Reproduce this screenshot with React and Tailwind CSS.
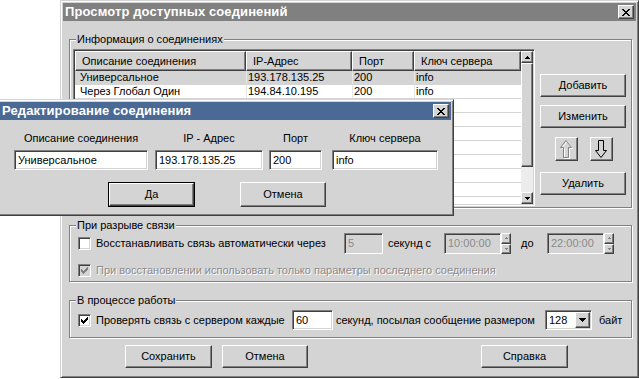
import React from 'react';

// classic 3D edges
const raised =
  'border border-t-white border-l-white border-r-[#404040] border-b-[#404040] shadow-[inset_-1px_-1px_0_#808080] bg-[#d4d4d4]';
const sunken =
  'border border-t-[#808080] border-l-[#808080] border-r-white border-b-white shadow-[inset_1px_1px_0_#404040,inset_-1px_-1px_0_#d4d4d4]';
const frame =
  'border border-t-[#d4d4d4] border-l-[#d4d4d4] border-r-[#404040] border-b-[#404040] shadow-[inset_1px_1px_0_#fff,inset_-1px_-1px_0_#808080] bg-[#d4d4d4] p-[2px]';
const disabledText = 'text-[#8a8a8a] [text-shadow:1px_1px_0_#fff]';

function CloseX() {
  return (
    <svg width="8" height="7" viewBox="0 0 8 7" shapeRendering="crispEdges">
      <path
        d="M0 0h2v1h-2z M6 0h2v1h-2z M1 1h2v1h-2z M5 1h2v1h-2z M2 2h4v1h-4z M3 3h2v1h-2z M2 4h4v1h-4z M1 5h2v1h-2z M5 5h2v1h-2z M0 6h2v1h-2z M6 6h2v1h-2z"
        fill="#000"
      />
    </svg>
  );
}

function TitleBar({ title, active }) {
  return (
    <div
      className={`h-[18px] flex items-center justify-between pl-[2px] pr-[2px] ${
        active ? 'bg-[#4a6995]' : 'bg-[#808080]'
      }`}
    >
      <span className="text-white font-bold text-[13px] leading-[16px] tracking-[0.1px]">{title}</span>
      <div className={`${raised} w-[16px] h-[14px] flex items-center justify-center`}>
        <CloseX />
      </div>
    </div>
  );
}

function Button({ className = '', children, isDefault }) {
  if (isDefault) {
    return (
      <div className={`border border-black ${className} flex`}>
        <div className={`${raised} flex-1 flex items-center justify-center`}>{children}</div>
      </div>
    );
  }
  return <div className={`${raised} ${className} flex items-center justify-center`}>{children}</div>;
}

function Check({ checked, disabled }) {
  return (
    <div
      className={`${sunken} w-[13px] h-[13px] shrink-0 flex items-center justify-center ${
        disabled ? 'bg-[#d4d4d4]' : 'bg-white'
      }`}
    >
      {checked && (
        <svg width="7" height="7" viewBox="0 0 7 7" shapeRendering="crispEdges">
          <path
            d="M6 0h1v1h-1z M5 1h2v1h-2z M0 2h1v1h-1z M4 2h3v1h-3z M0 3h2v1h-2z M3 3h3v1h-3z M0 4h5v1h-5z M1 5h3v1h-3z M2 6h1v1h-1z"
            fill={disabled ? '#808080' : '#000'}
          />
        </svg>
      )}
    </div>
  );
}

function Group({ label, className = '', children }) {
  return (
    <div className={`relative border border-[#808080] shadow-[inset_1px_1px_0_#fff,1px_1px_0_#fff] ${className}`}>
      <span className="absolute -top-[7px] left-[6px] bg-[#d4d4d4] px-[1px] leading-[13px]">{label}</span>
      {children}
    </div>
  );
}

function Tri({ dir = 'up', color = '#000' }) {
  const d =
    dir === 'up'
      ? 'M3 0h1v1h-1z M2 1h3v1h-3z M1 2h5v1h-5z M0 3h7v1h-7z'
      : 'M0 0h7v1h-7z M1 1h5v1h-5z M2 2h3v1h-3z M3 3h1v1h-1z';
  return (
    <svg width="7" height="4" viewBox="0 0 7 4" shapeRendering="crispEdges">
      <path d={d} fill={color} />
    </svg>
  );
}

function SmallTri({ dir = 'up' }) {
  const d = dir === 'up' ? 'M1 0h1v1h-1z M0 1h3v1h-3z' : 'M0 0h3v1h-3z M1 1h1v1h-1z';
  return (
    <svg width="3" height="2" viewBox="0 0 3 2" shapeRendering="crispEdges">
      <path d={d} fill="#808080" />
    </svg>
  );
}

function Arrow({ dir, disabled }) {
  const up = 'M6 0.5 L11.5 7.5 H8.5 V17.5 H3.5 V7.5 H0.5 Z';
  const down = 'M6 17.5 L11.5 10.5 H8.5 V0.5 H3.5 V10.5 H0.5 Z';
  const d = dir === 'up' ? up : down;
  return (
    <svg width="13" height="19" viewBox="0 0 13 19">
      {disabled && <path d={d} transform="translate(1 1)" fill="none" stroke="#fff" strokeWidth="1" />}
      <path d={d} fill="none" stroke={disabled ? '#808080' : '#000'} strokeWidth="1" />
    </svg>
  );
}

function TimeEdit({ value }) {
  return (
    <div className="flex items-center">
      <div className={`${sunken} w-[57px] h-[21px] bg-[#d4d4d4] flex items-center pl-[3px] text-[#8a8a8a]`}>
        {value}
      </div>
      <div className="w-[10px] h-[21px] flex flex-col">
        <div className={`${raised} flex-1 flex items-center justify-center`}>
          <SmallTri dir="up" />
        </div>
        <div className={`${raised} flex-1 flex items-center justify-center`}>
          <SmallTri dir="down" />
        </div>
      </div>
    </div>
  );
}

const rows = [
  ['Универсальное', '193.178.135.25', '200', 'info'],
  ['Через Глобал Один', '194.84.10.195', '200', 'info'],
];

function ListView() {
  const cols = ['w-[171px]', 'w-[106px]', 'w-[62px]', 'w-[107px]'];
  const heads = ['Описание соединения', 'IP-Адрес', 'Порт', 'Ключ сервера'];
  const empty = Array.from({ length: 8 });
  return (
    <div className={`${sunken} w-[462px] h-[157px] bg-white flex p-[1px] overflow-hidden`}>
      <div className="w-[446px] flex flex-col overflow-hidden">
        <div className="flex h-[20px] shrink-0">
          {heads.map((h, i) => (
            <div key={h} className={`${raised} ${cols[i]} flex items-center pl-[6px]`}>
              {h}
            </div>
          ))}
        </div>
        {rows.map((r, ri) => (
          <div
            key={ri}
            className={`flex h-[14px] shrink-0 border-b border-[#d4d4d4] ${ri === 0 ? 'bg-[#d4d4d4]' : 'bg-white'}`}
          >
            {r.map((c, i) => (
              <div
                key={i}
                className={`${cols[i]} ${i === 0 ? 'pl-[5px]' : 'pl-[1px] border-l border-[#e6e6e6]'} leading-[13px]`}
              >
                {c}
              </div>
            ))}
          </div>
        ))}
        {empty.map((_, i) => (
          <div key={i} className="h-[14px] shrink-0 border-b border-[#d4d4d4]" />
        ))}
      </div>
      <div className="w-[12px] flex flex-col">
        <div className={`${raised} h-[12px] flex items-center justify-center`}>
          <svg width="5" height="3" viewBox="0 0 5 3" shapeRendering="crispEdges">
            <path d="M2 0h1v1h-1z M1 1h3v1h-3z M0 2h5v1h-5z" fill="#000" />
          </svg>
        </div>
        <div className={`${raised} h-[104px]`} />
        <div className="h-[25px] bg-[#ececec]" />
        <div className={`${raised} h-[12px] flex items-center justify-center`}>
          <svg width="5" height="3" viewBox="0 0 5 3" shapeRendering="crispEdges">
            <path d="M0 0h5v1h-5z M1 1h3v1h-3z M2 2h1v1h-1z" fill="#000" />
          </svg>
        </div>
      </div>
    </div>
  );
}

function EditDialog() {
  const fields = [
    { label: 'Описание соединения', value: 'Универсальное', w: 'w-[134px]' },
    { label: 'IP - Адрес', value: '193.178.135.25', w: 'w-[108px]' },
    { label: 'Порт', value: '200', w: 'w-[53px]' },
    { label: 'Ключ сервера', value: 'info', w: 'w-[106px]' },
  ];
  return (
    <div className={`${frame} absolute left-[-3px] top-[99px] w-[457px] h-[117px] flex flex-col`}>
      <TitleBar title="Редактирование соединения" active />
      <div className="flex pl-[14px] mt-[12px]">
        {fields.map((f, i) => (
          <div
            key={f.label}
            className={`${f.w} flex flex-col items-center ${
              i === 1 ? 'ml-[7px]' : i === 2 ? 'ml-[6px]' : i === 3 ? 'ml-[10px]' : ''
            }`}
          >
            <span className="h-[13px] leading-[13px] whitespace-nowrap">{f.label}</span>
            <div className={`${sunken} bg-white w-full h-[20px] mt-[5px] flex items-center pl-[3px]`}>
              {f.value}
            </div>
          </div>
        ))}
      </div>
      <div className="flex pl-[108px] mt-[12px]">
        <Button isDefault className="w-[87px] h-[25px]">
          Да
        </Button>
        <Button className="w-[86px] h-[25px] ml-[45px]">Отмена</Button>
      </div>
    </div>
  );
}

export default function App() {
  return (
    <div className="relative w-[639px] h-[379px] bg-white overflow-hidden font-['Liberation_Sans',Arial,sans-serif] text-[11px] leading-[13px] text-black">
      {/* main window */}
      <div className={`${frame} absolute left-[60px] top-0 w-[579px] h-[378px] flex flex-col`}>
        <TitleBar title="Просмотр доступных соединений" />
        <div className="pl-[6px] flex flex-col">
          <Group label="Информация о соединениях" className="w-[563px] h-[169px] mt-[18px]">
            <div className="flex pl-[3px] pt-[9px]">
              <ListView />
              <div className="ml-[5px] w-[86px] pt-[25px] flex flex-col">
                <Button className="h-[23px]">Добавить</Button>
                <Button className="h-[23px] mt-[8px]">Изменить</Button>
                <div className="flex mt-[9px] pl-[15px] gap-[12px]">
                  <Button className="w-[23px] h-[24px]">
                    <Arrow dir="up" disabled />
                  </Button>
                  <Button className="w-[23px] h-[24px]">
                    <Arrow dir="down" />
                  </Button>
                </div>
                <Button className="h-[23px] mt-[11px]">Удалить</Button>
              </div>
            </div>
          </Group>

          <Group label="При разрыве связи" className="w-[563px] h-[57px] mt-[17px]">
            <div className="pl-[8px] pt-[7px] flex flex-col">
              <div className="flex items-center h-[21px]">
                <Check />
                <span className="ml-[5px] w-[248px] whitespace-nowrap">Восстанавливать связь автоматически через</span>
                <div className={`${sunken} w-[39px] h-[21px] bg-[#d4d4d4] flex items-center pl-[3px] text-[#8a8a8a]`}>
                  5
                </div>
                <span className="ml-[5px] w-[56px]">секунд с</span>
                <TimeEdit value="10:00:00" />
                <span className="ml-[10px] w-[26px]">до</span>
                <TimeEdit value="22:00:00" />
              </div>
              <div className="flex items-center h-[13px] mt-[10px]">
                <Check checked disabled />
                <span className={`ml-[5px] whitespace-nowrap ${disabledText}`}>
                  При восстановлении использовать только параметры последнего соединения
                </span>
              </div>
            </div>
          </Group>

          <Group label="В процессе работы" className="w-[563px] h-[38px] mt-[18px]">
            <div className="pl-[8px] pt-[9px] flex items-center h-[29px]">
              <Check checked />
              <span className="ml-[5px] w-[196px] whitespace-nowrap">Проверять связь с сервером каждые</span>
              <div className={`${sunken} w-[41px] h-[20px] bg-white flex items-center pl-[3px]`}>60</div>
              <span className="ml-[3px] w-[209px] whitespace-nowrap">секунд, посылая сообщение размером</span>
              <div className={`${sunken} w-[47px] h-[20px] bg-white flex items-center p-[1px]`}>
                <span className="flex-1 pl-[2px]">128</span>
                <div className={`${raised} w-[15px] h-full flex items-center justify-center`}>
                  <Tri dir="down" />
                </div>
              </div>
              <span className="ml-[7px]">байт</span>
            </div>
          </Group>

          <div className="flex pl-[56px] mt-[7px]">
            <Button className="w-[87px] h-[23px]">Сохранить</Button>
            <Button className="w-[86px] h-[23px] ml-[10px]">Отмена</Button>
            <Button className="w-[87px] h-[23px] ml-[173px]">Справка</Button>
          </div>
        </div>
      </div>

      <EditDialog />
    </div>
  );
}
